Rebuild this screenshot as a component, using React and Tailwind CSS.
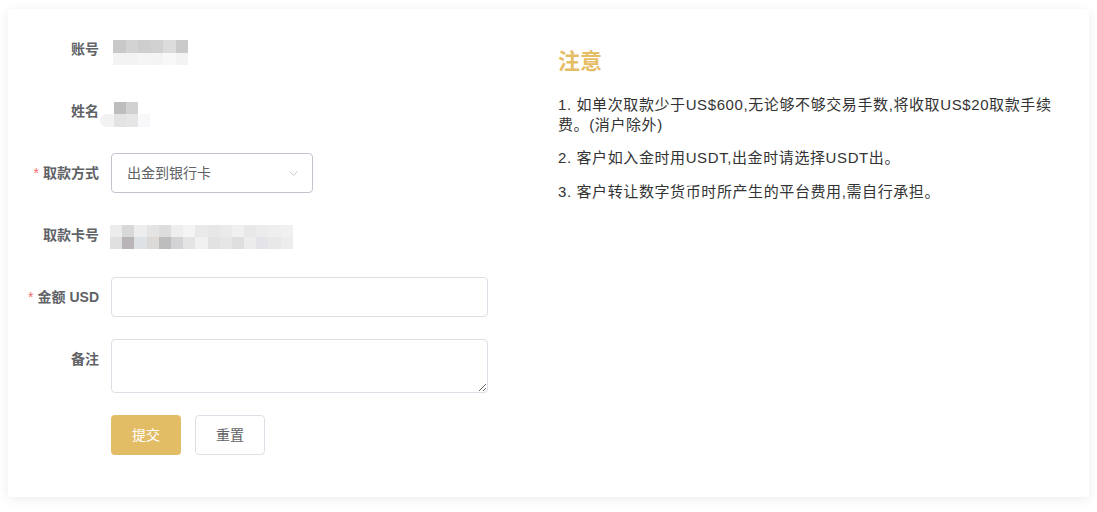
import React, { useState } from "react";
import { ChevronDown } from "lucide-react";

const FONT = { fontFamily: '"Liberation Sans", "Noto Sans CJK SC", sans-serif' };

// blurred / pixelated placeholder for hidden values
const Mask = ({ rows, size = 12, className = "" }) => (
  <div className={"flex flex-col blur-[0.6px] " + className}>
    {rows.map((row, i) => (
      <div key={i} className="flex">
        {row.map((c, j) => (
          <div key={j} style={{ background: c, width: size, height: size }} />
        ))}
      </div>
    ))}
  </div>
);

const FormItem = ({ label, required, children }) => (
  <div className="flex mb-[22px]">
    <label className="w-[83px] shrink-0 pr-3 text-right text-[14px] leading-[40px] font-bold text-[#606266]">
      {required && <span className="text-[#f56c6c] mr-1 font-normal">*</span>}
      {label}
    </label>
    <div className="flex-1 min-h-[40px] flex items-start">{children}</div>
  </div>
);

const App = () => {
  const [form, setForm] = useState({ amount: "", remark: "" });

  const handleChange = (e) => {
    setForm({ ...form, [e.target.id]: e.target.value });
  };

  return (
    <div className="min-h-[512px] bg-white pt-[9px] px-[8px]" style={FONT}>
      <div className="w-[1081px] rounded bg-white shadow-[0_2px_12px_0_rgba(0,0,0,0.08)] px-5 pt-5 pb-5 flex">
        {/* form */}
        <div className="w-[460px] shrink-0">
          <FormItem label="账号">
            <Mask
              className="mt-[11px] ml-[2px] rounded"
              size={12.5}
              rows={[
                ["#c9c9c9", "#d3d3d3", "#cecece", "#d1d1d1", "#dcdcdc", "#cacaca"],
                ["#f3f3f3", "#f3f3f3", "#f5f5f5", "#f4f4f4", "#f8f8f8", "#f3f3f3"],
              ]}
            />
          </FormItem>

          <FormItem label="姓名">
            <div className="mt-[11px] -ml-[11px] flex flex-col blur-[0.6px]">
              <div className="flex pl-[14px]">
                <div className="w-[12px] h-[12px] bg-[#bdbdbd]" />
                <div className="w-[12px] h-[12px] bg-[#d1d1d1]" />
              </div>
              <div className="flex">
                <div className="w-[14px] h-[13px] bg-[#f2f2f2] rounded-l-full" />
                <div className="w-[12px] h-[13px] bg-[#e3e3e3]" />
                <div className="w-[12px] h-[13px] bg-[#e6e6e6]" />
                <div className="w-[12px] h-[13px] bg-[#f8f8fa]" />
              </div>
            </div>
          </FormItem>

          <FormItem label="取款方式" required>
            <div className="w-[202px] h-[40px] rounded border border-[#c0c4cc] flex items-center justify-between pl-[15px] pr-[11px] text-[14px] text-[#606266]">
              <span>出金到银行卡</span>
              <ChevronDown size={15} strokeWidth={1.5} className="text-[#c0c4cc]" />
            </div>
          </FormItem>

          <FormItem label="取款卡号">
            <Mask
              className="mt-[10px] -ml-[1px] rounded-l-lg"
              size={12.2}
              rows={[
                ["#ececec", "#d8d8d8", "#ededed", "#e4e4e4", "#dddddd", "#eeeeee", "#f4f4f4", "#e9e9e9", "#e7e7e7", "#eaeaea", "#f0f0f0", "#e8e8e8", "#ececec", "#eeeeee", "#f0f0f0"],
                ["#e0e0e0", "#b9b4b8", "#dfe2e4", "#dcd9d6", "#bdbdbd", "#d3d3d5", "#e4e4e4", "#f0f0f0", "#e2e2e2", "#e6e6e6", "#dedede", "#ececec", "#e4e4e8", "#e8e8e8", "#ededed"],
              ]}
            />
          </FormItem>

          <FormItem label="金额 USD" required>
            <input
              id="amount"
              value={form.amount}
              onChange={handleChange}
              className="w-[377px] h-[40px] rounded border border-[#dcdfe6] px-[15px] text-[14px] text-[#606266] outline-none"
            />
          </FormItem>

          <FormItem label="备注">
            <textarea
              id="remark"
              value={form.remark}
              onChange={handleChange}
              className="block w-[377px] h-[54px] rounded border border-[#dcdfe6] px-[15px] py-[5px] text-[14px] text-[#606266] outline-none"
            />
          </FormItem>

          <div className="flex ml-[83px] gap-[14px] mb-[22px]">
            <button className="w-[70px] h-[40px] rounded bg-[#e3bc66] text-white text-[14px]">
              提交
            </button>
            <button className="w-[70px] h-[40px] rounded border border-[#dcdfe6] bg-white text-[#606266] text-[14px]">
              重置
            </button>
          </div>
        </div>

        {/* notice */}
        <div className="ml-[70px] w-[508px] text-[15px] leading-[20px] tracking-[0.6px] text-[#333333]">
          <h3 className="mt-[18px] text-[22px] leading-[30px] tracking-normal font-bold text-[#e5bd65]">注意</h3>
          <p className="mt-[18px]">1. 如单次取款少于US$600,无论够不够交易手数,将收取US$20取款手续费。(消户除外)</p>
          <p className="mt-[13px]">2. 客户如入金时用USDT,出金时请选择USDT出。</p>
          <p className="mt-[14px]">3. 客户转让数字货币时所产生的平台费用,需自行承担。</p>
        </div>
      </div>
    </div>
  );
};

export default App;
